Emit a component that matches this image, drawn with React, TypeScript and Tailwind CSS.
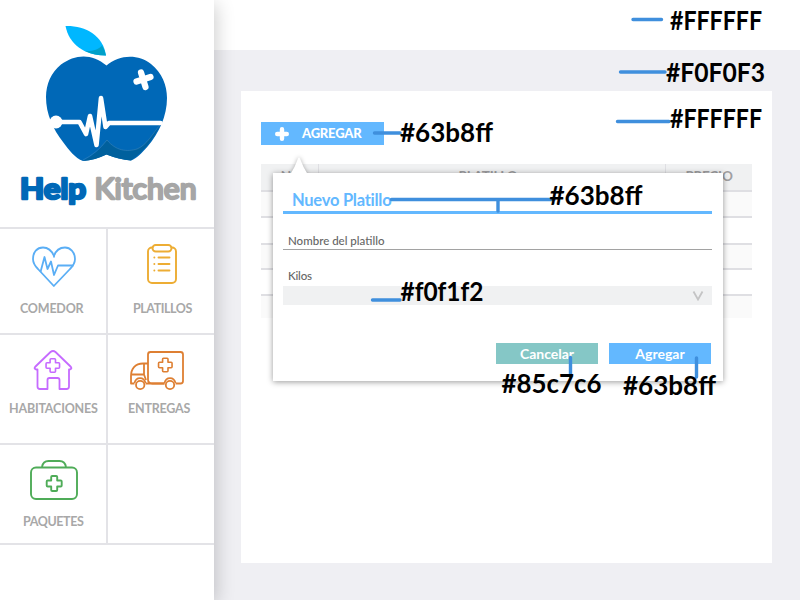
import type { ReactNode } from "react";

const PLUS = "M-2 -7.5h4a1 1 0 0 1 1 1v3.5h3.5a1 1 0 0 1 1 1v4a1 1 0 0 1-1 1h-3.5v3.5a1 1 0 0 1-1 1h-4a1 1 0 0 1-1-1v-3.5h-3.5a1 1 0 0 1-1-1v-4a1 1 0 0 1 1-1h3.5v-3.5a1 1 0 0 1 1-1z";

function Logo() {
  return (
    <svg width="214" height="227" viewBox="0 0 214 227" className="block">
      <path d="M65.500 26C85 25.500 103 35 106 55.500C84 55.500 69 44 65.500 26Z" fill="#00b7ff" />
      <path d="M85 51C92 51.500 98 50 102 45.500Q105 50 106 55.500Q94 55.500 85 51Z" fill="#00a0c8" />
      <path
        d="M106.500 65.500C119 54.500 138 53.500 151 64C162 73 167 85 167 98C167 116 159 133 148 146C142 153 137 158 131 160.500Q119 159.500 106.500 154.500Q95 160 83 161C75 158 69 150 63 142C53 129 46 114 46 97C46 84 51 73 61 64.500C75 54 92 53 106.500 65.500Z"
        fill="#0068b7"
      />
      <path d="M83 161Q97 154 107 140C116 151 127 152 137 149C147 145 153 133 160 125Q150 147 131 160.500Q119 159.500 106.500 154.500Q95 160 83 161Z" fill="#00609d" />
      <path d="M83 160Q97 153 107 140C116 151 127 152 137 149C147 145 153 133 160 125" fill="none" stroke="#4389bd" strokeWidth=".5" />
      <path d="M56 122H79.500L86 134L90 116L96.500 145L101 98L105.500 127L109 123H160.500" fill="none" stroke="#fff" strokeWidth="4.600" strokeLinecap="round" strokeLinejoin="round" />
      <circle cx="56" cy="122" r="6.500" fill="#fff" />
      <path d="M141 72.500L145.500 87M136.500 81.500L150.500 77" stroke="#fff" strokeWidth="6.200" strokeLinecap="round" />
      <g fontFamily="Lato, sans-serif" fontSize="29" strokeLinejoin="round">
        <text x="20" y="198.500" fontWeight="700" textLength="66" lengthAdjust="spacingAndGlyphs" fill="#0068b7" stroke="#0068b7" strokeWidth="2.600">Help</text>
        <text x="94.500" y="198.500" fontWeight="400" textLength="102" lengthAdjust="spacingAndGlyphs" fill="#a6a6a6" stroke="#a6a6a6" strokeWidth="2.400">Kitchen</text>
      </g>
    </svg>
  );
}

function HeartIcon() {
  return (
    <svg width="46" height="42" viewBox="31 246 46 42" fill="none" stroke="#5aaef5" strokeWidth="1.800" strokeLinejoin="round">
      <path d="M54 257.500V256C51 249 46 247.500 43 247.500C37 247.500 33 252 33 259C33 263 35 266 38 269L53.800 286L70 269C73 266 75 263 75 259C75 252 70 247.500 65 247.500C60 247.500 56 250 54 256" />
      <path d="M40.500 272L44.500 257L47.500 269L51 261.500L54 275L58 265.500H73.500" />
    </svg>
  );
}

function ClipboardIcon() {
  return (
    <svg width="32" height="42" viewBox="146 243 32 42" fill="none" stroke="#edad34" strokeWidth="1.900" strokeLinecap="round">
      <path d="M152.500 247.500H152a4 4 0 0 0-4 4V279a4 4 0 0 0 4 4H172a4 4 0 0 0 4-4V251.500a4 4 0 0 0-4-4H171.500" />
      <rect x="152.500" y="245" width="19" height="6.500" rx="3.200" />
      <path d="M158.500 257.500H169.500M158.500 264H169.500M158.500 270.500H169.500M154.300 257.500h.1M154.300 264h.1M154.300 270.500h.1" />
    </svg>
  );
}

function HouseIcon() {
  return (
    <svg width="40" height="42" viewBox="33 349 40 42" fill="none" stroke="#c66bff" strokeWidth="1.800" strokeLinejoin="round">
      <path d="M37.500 369.500H36Q33.500 368.500 35.500 366.500L50.500 352Q53 350 55.500 352L70.500 366.500Q72.500 368.500 70 369.500H69V386.500Q69 389 66.500 389H59.500V380Q59.500 378 57.500 378H49.500Q47.500 378 47.500 380V389H40Q37.500 389 37.500 386.500Z" />
      <path transform="translate(52.800 365.500)scale(.9)" d={PLUS} />
    </svg>
  );
}

function TruckIcon() {
  return (
    <svg width="56" height="42" viewBox="129 349 56 42" fill="none" stroke="#de7f32" strokeWidth="1.800" strokeLinejoin="round">
      <path d="M164.500 383.500H152.500Q148 383.500 148 379.500V354.500Q148 352 150.500 352H180.500Q183 352 183 354.500V381Q183 383.500 180.500 383.500H175.500" />
      <path d="M148 363.500H143C135 363.500 131 369 131 376V383.500H134.500M145.500 383.500H164.500M144 364V375M131.500 374.500H144L146 380" />
      <path d="M134.500 383C136 376.500 144 376.500 145.500 383M164.500 383C166 376.500 174 376.500 175.500 383" />
      <circle cx="140.200" cy="385" r="4.200" />
      <circle cx="170" cy="385" r="4.200" />
      <path transform="translate(165.300 365)scale(.9)" d={PLUS} />
    </svg>
  );
}

function KitIcon() {
  return (
    <svg width="50" height="42" viewBox="29 459 50 42" fill="none" stroke="#4fac58" strokeWidth="1.900" strokeLinejoin="round">
      <rect x="31" y="467.500" width="46" height="31.500" rx="5" />
      <path d="M42 467Q43 461 48.500 461H59.500Q65 461 66 467" />
      <path transform="translate(54.200 483.500)" d={PLUS} />
    </svg>
  );
}

type TileProps = { label: string; icon: ReactNode; className: string; iconClass: string; labelClass: string };

function Tile({ label, icon, className, iconClass, labelClass }: TileProps) {
  return (
    <div className={`flex flex-col border-[#e3e3e7] ${className}`}>
      <div className={iconClass}>{icon}</div>
      <span className={`whitespace-nowrap text-[12.500px] leading-[14px] font-bold text-[#a8a8a8] ${labelClass}`}>{label}</span>
    </div>
  );
}

function Sidebar() {
  return (
    <aside className="relative z-10 h-[600px] w-[214px] shrink-0 bg-white shadow-[2px_4px_18px_rgba(0,0,0,0.2)]">
      <Logo />
      <nav className="grid grid-cols-[108px_106px] grid-rows-[106px_110px_98px] border-y-2 border-[#e3e3e7]">
        <Tile label="COMEDOR" icon={<HeartIcon />} className="border-r-2 border-b-2" iconClass="ml-[31px] mt-[17px] h-[42px]" labelClass="ml-[20px] mt-[14px] tracking-[-0.2px]" />
        <Tile label="PLATILLOS" icon={<ClipboardIcon />} className="border-b-2" iconClass="ml-[38px] mt-[14px] h-[42px]" labelClass="ml-[25px] mt-[17px] tracking-[-0.45px]" />
        <Tile label="HABITACIONES" icon={<HouseIcon />} className="border-r-2 border-b-2" iconClass="ml-[33px] mt-[14px] h-[42px]" labelClass="ml-[9px] mt-[11px] tracking-[-0.2px]" />
        <Tile label="ENTREGAS" icon={<TruckIcon />} className="border-b-2" iconClass="ml-[21px] mt-[14px] h-[42px]" labelClass="ml-[20px] mt-[11px] tracking-[-0.2px]" />
        <Tile label="PAQUETES" icon={<KitIcon />} className="border-r-2" iconClass="ml-[29px] mt-[14px] h-[42px]" labelClass="ml-[23px] mt-[14px] tracking-[-0.4px]" />
        <div />
      </nav>
    </aside>
  );
}

function DishTable() {
  return (
    <div className="mt-[19px] w-[491px] text-[13.500px] font-bold tracking-[-0.2px] text-[#a0a0a2]">
      <div className="grid h-[26px] grid-cols-[57px_346px_86px] gap-px bg-[#dfdfe3] leading-[25px]">
        <div className="bg-[#f0f1f2] text-center">No</div>
        <div className="bg-[#f0f1f2] pr-[8px] text-center">PLATILLO</div>
        <div className="bg-[#f0f1f2] text-center">PRECIO</div>
      </div>
      <div className="h-[26px] border-t-2 border-[#dfdfe3] bg-[#fafafa]" />
      <div className="h-[27px] border-t-2 border-[#dfdfe3]" />
      <div className="h-[25px] border-t-2 border-[#dfdfe3] bg-[#fafafa]" />
      <div className="h-[26px] border-t-2 border-[#dfdfe3]" />
      <div className="h-[24px] border-t-2 border-[#dfdfe3] bg-[#fafafa]" />
    </div>
  );
}

function NewDishPopover() {
  return (
    <section className="absolute top-[173px] left-[273px] z-20 h-[208px] w-[450px] bg-white px-[10px] shadow-[0_1px_6px_rgba(0,0,0,0.4)]">
      <svg className="absolute -top-[17px] left-[14px] overflow-visible drop-shadow-[0_0_2px_rgba(0,0,0,0.3)]" width="24" height="18" viewBox="0 0 24 18">
        <path d="M3.500 18Q8 11 11 2.500Q12 .5 13 2.500Q16 11 20.500 18Z" fill="#fff" />
      </svg>
      <div className="absolute inset-0 bg-white" />
      <div className="relative">
        <h2 className="h-[41px] w-[429px] border-b-[3px] border-[#63b8ff] pt-[16px] pl-[9px] text-[16.500px] leading-[22px] font-bold tracking-[-0.25px] text-[#63b8ff]">Nuevo Platillo</h2>
        <label className="flex h-[36px] w-[429px] items-end border-b border-[#a2a2a2] pb-px pl-[5px] text-[11.500px] leading-[14px] font-medium text-[#666]">Nombre del platillo</label>
        <div className="mt-[19px] pl-[5px] text-[11.500px] leading-[14px] font-medium tracking-[-0.2px] text-[#666]">Kilos</div>
        <div className="mt-[3px] flex h-[19px] w-[429px] items-center justify-end bg-[#f0f1f2] pr-[8px]">
          <svg width="12" height="11" viewBox="0 0 12 11" fill="none" stroke="#c4c4c5" strokeWidth="1.800"><path d="M1.500 1.500L6 9.500L10.500 1.500" /></svg>
        </div>
        <div className="mt-[38px] ml-[213px] flex gap-[11px] text-[14px] leading-[21px] font-bold text-white">
          <button className="h-[21px] w-[102px] bg-[#85c7c6]">Cancelar</button>
          <button className="h-[21px] w-[102px] bg-[#63b8ff]">Agregar</button>
        </div>
      </div>
    </section>
  );
}

const labels = [
  { text: "#FFFFFF", x: 670, y: 29.500, w: 92 },
  { text: "#F0F0F3", x: 666, y: 81.500, w: 99 },
  { text: "#FFFFFF", x: 670, y: 128, w: 92 },
  { text: "#63b8ff", x: 400, y: 142, w: 93 },
  { text: "#63b8ff", x: 549.500, y: 204.500, w: 93 },
  { text: "#f0f1f2", x: 400.500, y: 300.500, w: 83 },
  { text: "#85c7c6", x: 501.500, y: 393, w: 100 },
  { text: "#63b8ff", x: 623, y: 395, w: 93 },
];

function ColorCallouts() {
  return (
    <svg className="pointer-events-none absolute inset-0 z-30" width="800" height="600" viewBox="0 0 800 600">
      <path
        d="M633 19.500H661.500M620.500 72H665M617.500 121.500H669M374.500 133H400M391.500 199.500H554M498 199.500V211M372.500 300H400M570.500 357.500V377M696.500 358V377"
        stroke="#3f8fdd"
        strokeWidth="3.400"
        strokeLinecap="round"
      />
      <g fontFamily="Lato, sans-serif" fontWeight="700" fontSize="26">
        {labels.map((l) => (
          <text key={`${l.x}-${l.y}`} x={l.x} y={l.y} textLength={l.w} lengthAdjust="spacingAndGlyphs">{l.text}</text>
        ))}
      </g>
    </svg>
  );
}

export default function App() {
  return (
    <div className="relative flex h-[600px] w-[800px] overflow-hidden bg-[#efeff3] font-[Lato,sans-serif]">
      <Sidebar />
      <div className="flex-1">
        <header className="h-[50px] bg-white" />
        <main className="mt-[41px] ml-[27px] h-[472px] w-[531px] bg-white pt-[31px] pl-[20px]">
          <button className="flex h-[23px] w-[123px] items-center bg-[#63b8ff] pl-[14px] text-[13px] font-black tracking-[-0.2px] text-white">
            <svg width="14" height="14" viewBox="0 0 14 14" stroke="#fff" strokeWidth="4.400" strokeLinecap="round"><path d="M7 2.200V11.800M2.200 7H11.800" /></svg>
            <span className="ml-[13px]">AGREGAR</span>
          </button>
          <DishTable />
        </main>
      </div>
      <NewDishPopover />
      <ColorCallouts />
    </div>
  );
}
